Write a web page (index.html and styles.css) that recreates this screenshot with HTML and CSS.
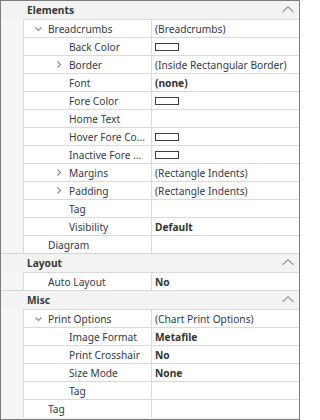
FILE: index.html
```html
<!DOCTYPE html>
<html>
<head>
<meta charset="utf-8">
<link rel="stylesheet" href="styles.css">
</head>
<body>
<div class="grid">
  <section class="section">
    <div class="cat"><span>Elements</span><svg class="up" width="12" height="7" viewBox="0 0 12 7"><path d="M0.5 6 L6 0.8 L11.5 6" /></svg></div>
    <div class="rows">
      <div class="row"><div class="name l1"><svg class="exp" width="12" height="12" viewBox="0 0 12 12"><path d="M2.5 4.5 L5.5 7.5 L8.5 4.5"/></svg><span>Breadcrumbs</span></div><div class="val">(Breadcrumbs)</div></div>
      <div class="row"><div class="name l2"><i class="slot"></i><span>Back Color</span></div><div class="val"><i class="swatch"></i></div></div>
      <div class="row"><div class="name l2"><svg class="exp" width="12" height="12" viewBox="0 0 12 12"><path d="M3.5 2.5 L6.5 5.5 L3.5 8.5"/></svg><span>Border</span></div><div class="val">(Inside Rectangular Border)</div></div>
      <div class="row"><div class="name l2"><i class="slot"></i><span>Font</span></div><div class="val b">(none)</div></div>
      <div class="row"><div class="name l2"><i class="slot"></i><span>Fore Color</span></div><div class="val"><i class="swatch"></i></div></div>
      <div class="row"><div class="name l2"><i class="slot"></i><span>Home Text</span></div><div class="val"></div></div>
      <div class="row"><div class="name l2"><i class="slot"></i><span>Hover Fore Co...</span></div><div class="val"><i class="swatch"></i></div></div>
      <div class="row"><div class="name l2"><i class="slot"></i><span>Inactive Fore ...</span></div><div class="val"><i class="swatch"></i></div></div>
      <div class="row"><div class="name l2"><svg class="exp" width="12" height="12" viewBox="0 0 12 12"><path d="M3.5 2.5 L6.5 5.5 L3.5 8.5"/></svg><span>Margins</span></div><div class="val">(Rectangle Indents)</div></div>
      <div class="row"><div class="name l2"><svg class="exp" width="12" height="12" viewBox="0 0 12 12"><path d="M3.5 2.5 L6.5 5.5 L3.5 8.5"/></svg><span>Padding</span></div><div class="val">(Rectangle Indents)</div></div>
      <div class="row"><div class="name l2"><i class="slot"></i><span>Tag</span></div><div class="val"></div></div>
      <div class="row"><div class="name l2"><i class="slot"></i><span>Visibility</span></div><div class="val b">Default</div></div>
      <div class="row"><div class="name l1"><i class="slot"></i><span>Diagram</span></div><div class="val"></div></div>
    </div>
  </section>
  <section class="section">
    <div class="cat"><span>Layout</span><svg class="up" width="12" height="7" viewBox="0 0 12 7"><path d="M0.5 6 L6 0.8 L11.5 6" /></svg></div>
    <div class="rows">
      <div class="row"><div class="name l1"><i class="slot"></i><span>Auto Layout</span></div><div class="val b">No</div></div>
    </div>
  </section>
  <section class="section last">
    <div class="cat"><span>Misc</span><svg class="up" width="12" height="7" viewBox="0 0 12 7"><path d="M0.5 6 L6 0.8 L11.5 6" /></svg></div>
    <div class="rows">
      <div class="row"><div class="name l1"><svg class="exp" width="12" height="12" viewBox="0 0 12 12"><path d="M2.5 4.5 L5.5 7.5 L8.5 4.5"/></svg><span>Print Options</span></div><div class="val">(Chart Print Options)</div></div>
      <div class="row"><div class="name l2"><i class="slot"></i><span>Image Format</span></div><div class="val b">Metafile</div></div>
      <div class="row"><div class="name l2"><i class="slot"></i><span>Print Crosshair</span></div><div class="val b">No</div></div>
      <div class="row"><div class="name l2"><i class="slot"></i><span>Size Mode</span></div><div class="val b">None</div></div>
      <div class="row"><div class="name l2"><i class="slot"></i><span>Tag</span></div><div class="val"></div></div>
      <div class="row"><div class="name l1"><i class="slot"></i><span>Tag</span></div><div class="val"></div></div>
    </div>
  </section>
</div>
</body>
</html>
```
FILE: styles.css
```css
html, body {
  margin: 0;
  padding: 0;
  background: #ffffff;
}
body {
  font-family: "Noto Sans", "Liberation Sans", sans-serif;
  font-size: 10.2px;
  color: #343a48;
}
.grid {
  width: 300px;
  height: 420px;
  box-sizing: border-box;
  border: 1px solid #7c7c7c;
  background: #f5f5f5;
  display: flex;
  flex-direction: column;
}
.section + .section {
  border-top: 1px solid #d6d6d6;
}
.section.last {
  flex: 1;
  display: flex;
  flex-direction: column;
}
.cat {
  height: 18px;
  display: flex;
  align-items: center;
  justify-content: space-between;
  padding: 0 5px 0 26px;
  background: #f3f3f3;
  font-weight: bold;
  color: #383838;
}
.up {
  display: block;
  margin-top: -1px;
}
.up path {
  fill: none;
  stroke: #9a9a9a;
  stroke-width: 1.1;
}
.rows {
  padding-left: 22px;
  background: #f5f5f5;
}
.row {
  display: grid;
  grid-template-columns: 128px 1fr;
  height: 17px;
  border-top: 1px solid #dadada;
  border-left: 1px solid #dadada;
  background: #ffffff;
}
.name {
  box-sizing: border-box;
  border-right: 1px solid #dadada;
  display: flex;
  align-items: center;
  gap: 3px;
  white-space: nowrap;
  overflow: hidden;
}
.name.l1 {
  padding-left: 9px;
}
.name.l2 {
  padding-left: 30px;
}
.slot {
  display: block;
  width: 12px;
  flex: none;
}
.exp {
  display: block;
  flex: none;
}
.exp path {
  fill: none;
  stroke: #8c8c8c;
  stroke-width: 1.1;
}
.val {
  display: flex;
  align-items: center;
  padding-left: 3px;
  white-space: nowrap;
  overflow: hidden;
}
.val.b {
  font-weight: bold;
  color: #333333;
}
.swatch {
  display: block;
  width: 22px;
  height: 6px;
  border: 1px solid #3f3f3f;
  background: #ffffff;
}
```
